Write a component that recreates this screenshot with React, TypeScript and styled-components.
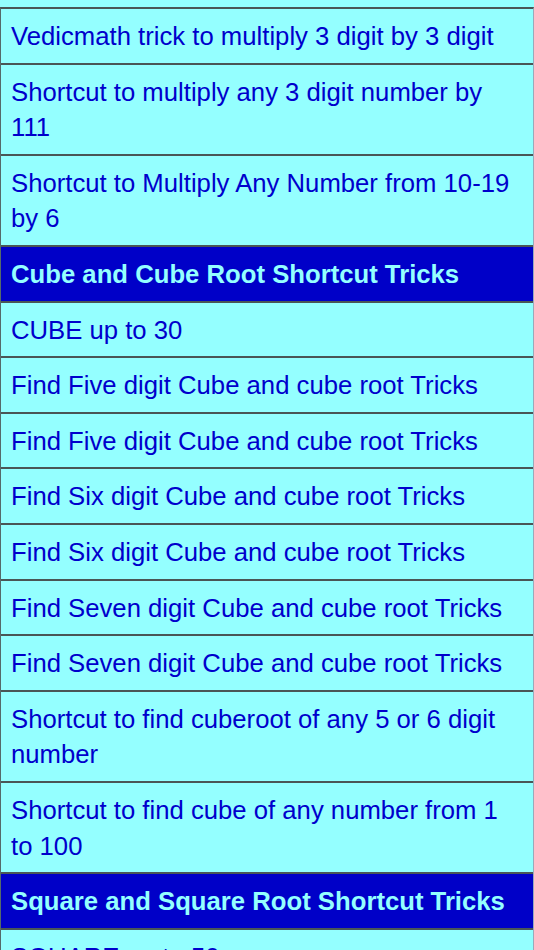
import styled, { createGlobalStyle } from "styled-components";

const GlobalStyle = createGlobalStyle`
  html, body {
    margin: 0;
    padding: 0;
    height: 950px;
    overflow: hidden;
    background: #94ffff;
  }
`;

const Page = styled.div`
  padding-top: 7px;
  font-family: "Liberation Sans", Arial, sans-serif;
`;

const List = styled.ul`
  list-style: none;
  margin: 0;
  padding: 0;
  border-left: 1px solid #556a6a;
  border-right: 1px solid #9ab;
  border-top: 2px solid #4a5656;
`;

const Row = styled.li<{ $header?: boolean }>`
  display: flex;
  align-items: center;
  padding: 10px 10px 8px 10px;
  font-size: 25.7px;
  line-height: 35.6px;
  font-weight: ${(p) => (p.$header ? 700 : 400)};
  color: ${(p) => (p.$header ? "#94ffff" : "#0000cc")};
  background: ${(p) => (p.$header ? "#0000c8" : "#94ffff")};
  border-bottom: 2px solid #4a5656;
  &:last-child {
    border-bottom: none;
  }
`;

interface IItem {
  text: string;
  header?: boolean;
}

const items: IItem[] = [
  { text: "Vedicmath trick to multiply 3 digit by 3 digit" },
  { text: "Shortcut to multiply any 3 digit number by 111" },
  { text: "Shortcut to Multiply Any Number from 10-19 by 6" },
  { text: "Cube and Cube Root Shortcut Tricks", header: true },
  { text: "CUBE up to 30" },
  { text: "Find Five digit Cube and cube root Tricks" },
  { text: "Find Five digit Cube and cube root Tricks" },
  { text: "Find Six digit Cube and cube root Tricks" },
  { text: "Find Six digit Cube and cube root Tricks" },
  { text: "Find Seven digit Cube and cube root Tricks" },
  { text: "Find Seven digit Cube and cube root Tricks" },
  { text: "Shortcut to find cuberoot of any 5 or 6 digit number" },
  { text: "Shortcut to find cube of any number from 1 to 100" },
  { text: "Square and Square Root Shortcut Tricks", header: true },
  { text: "SQUARE up to 50" },
];

const App = () => {
  return (
    <Page>
      <GlobalStyle />
      <List>
        {items.map((item, i) => (
          <Row key={i} $header={item.header}>
            {item.text}
          </Row>
        ))}
      </List>
    </Page>
  );
};

export default App;
